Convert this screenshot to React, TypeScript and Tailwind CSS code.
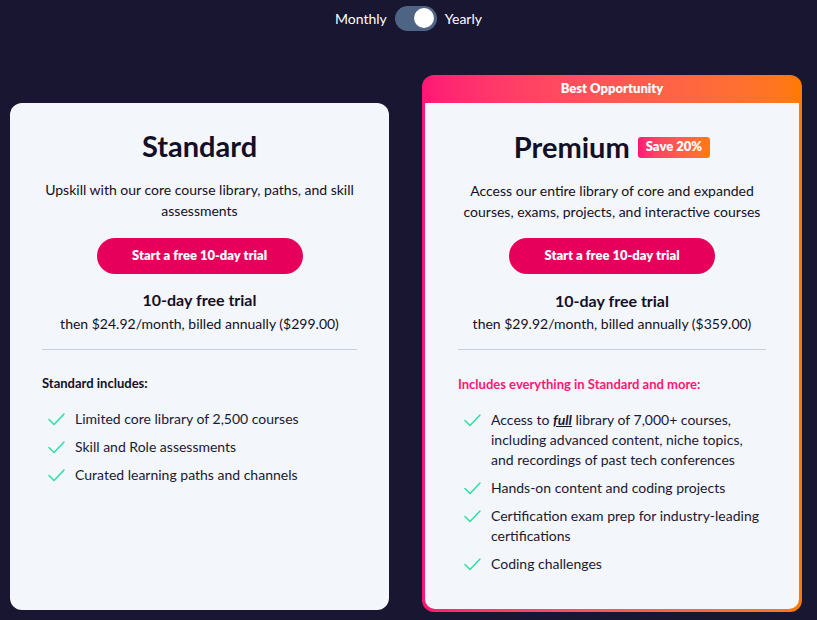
import React from "react";

const Check = () => (
  <svg width="17" height="13" viewBox="0 0 17 13" fill="none" className="shrink-0 mt-[4px]">
    <path d="M1 6.5 L6 11.5 L16 1" stroke="#2ee0a0" strokeWidth="1.5" strokeLinecap="round" strokeLinejoin="round" />
  </svg>
);

function Item({ children }: { children: React.ReactNode }) {
  return (
    <li className="flex gap-[10px] pl-[6px] text-[14px] leading-[20px] text-[#1b1834]">
      <Check />
      <span>{children}</span>
    </li>
  );
}

export default function App() {
  return (
    <div
      className="w-[817px] h-[620px] bg-[#181630] overflow-hidden"
      style={{ fontFamily: "Lato, 'Noto Sans', sans-serif" }}
    >
      <div className="flex items-center justify-center gap-[8px] h-[36px] text-white text-[14px]">
        <span>Monthly</span>
        <div className="w-[42px] h-[25px] rounded-full bg-[#4f6485] flex items-center justify-end pr-[3px]">
          <div className="w-[20px] h-[20px] rounded-full bg-white" />
        </div>
        <span>Yearly</span>
      </div>

      <div className="flex items-end gap-[33px] pl-[10px] mt-[39px]">
        {/* Standard */}
        <div className="w-[379px] h-[507px] rounded-[12px] bg-[#f3f6fa] px-[32px] pt-[25px] mb-[2px] text-[#130f25]">
          <h2 className="text-center text-[29px] leading-[36px] font-bold">Standard</h2>
          <p className="text-center text-[14px] leading-[21px] mt-[15px]">
            Upskill with our core course library, paths, and skill assessments
          </p>
          <div className="flex justify-center mt-[17px]">
            <button className="w-[206px] h-[36px] rounded-full bg-[#e6005c] text-white text-[13px] font-extrabold">
              Start a free 10-day trial
            </button>
          </div>
          <div className="text-center mt-[15px] text-[16px] leading-[22px] font-bold">10-day free trial</div>
          <div className="text-center text-[14px] leading-[24px] mt-[1px]">then $24.92/month, billed annually ($299.00)</div>
          <div className="h-px bg-[#c5d0dc] mt-[13px]" />
          <div className="mt-[23px] text-[13px] font-bold leading-[20px]">Standard includes:</div>
          <ul className="mt-[16px] flex flex-col gap-[8px]">
            <Item>Limited core library of 2,500 courses</Item>
            <Item>Skill and Role assessments</Item>
            <Item>Curated learning paths and channels</Item>
          </ul>
        </div>

        {/* Premium */}
        <div className="w-[380px] h-[537px] rounded-[12px] bg-gradient-to-r from-[#ff1675] to-[#ff7a00] p-[3px] pt-0 flex flex-col">
          <div className="h-[28px] flex items-center justify-center text-white text-[13px] font-extrabold">
            Best Opportunity
          </div>
          <div className="flex-1 bg-[#f3f6fa] rounded-b-[10px] px-[33px] pt-[26px] text-[#130f25]">
            <div className="flex items-center justify-center gap-[8px]">
              <h2 className="text-[29px] leading-[36px] font-bold">Premium</h2>
              <span className="h-[21px] px-[8px] rounded-[3px] bg-gradient-to-r from-[#ff1675] to-[#ff7a00] text-white text-[13px] font-extrabold flex items-center">
                Save 20%
              </span>
            </div>
            <p className="text-center text-[14px] leading-[21px] mt-[15px]">
              Access our entire library of core and expanded courses, exams, projects, and interactive courses
            </p>
            <div className="flex justify-center mt-[16px]">
              <button className="w-[206px] h-[36px] rounded-full bg-[#e6005c] text-white text-[13px] font-extrabold">
                Start a free 10-day trial
              </button>
            </div>
            <div className="text-center mt-[16px] text-[16px] leading-[22px] font-bold">10-day free trial</div>
            <div className="text-center text-[14px] leading-[24px]">then $29.92/month, billed annually ($359.00)</div>
            <div className="h-px bg-[#c5d0dc] mt-[13px]" />
            <div className="mt-[24px] text-[13px] font-bold leading-[20px] text-[#ff1675]">
              Includes everything in Standard and more:
            </div>
            <ul className="mt-[16px] flex flex-col gap-[8px]">
              <Item>
                Access to <b className="italic underline">full</b> library of 7,000+ courses, including advanced content, niche topics, and recordings of past tech conferences
              </Item>
              <Item>Hands-on content and coding projects</Item>
              <Item>Certification exam prep for industry-leading certifications</Item>
              <Item>Coding challenges</Item>
            </ul>
          </div>
        </div>
      </div>
    </div>
  );
}
